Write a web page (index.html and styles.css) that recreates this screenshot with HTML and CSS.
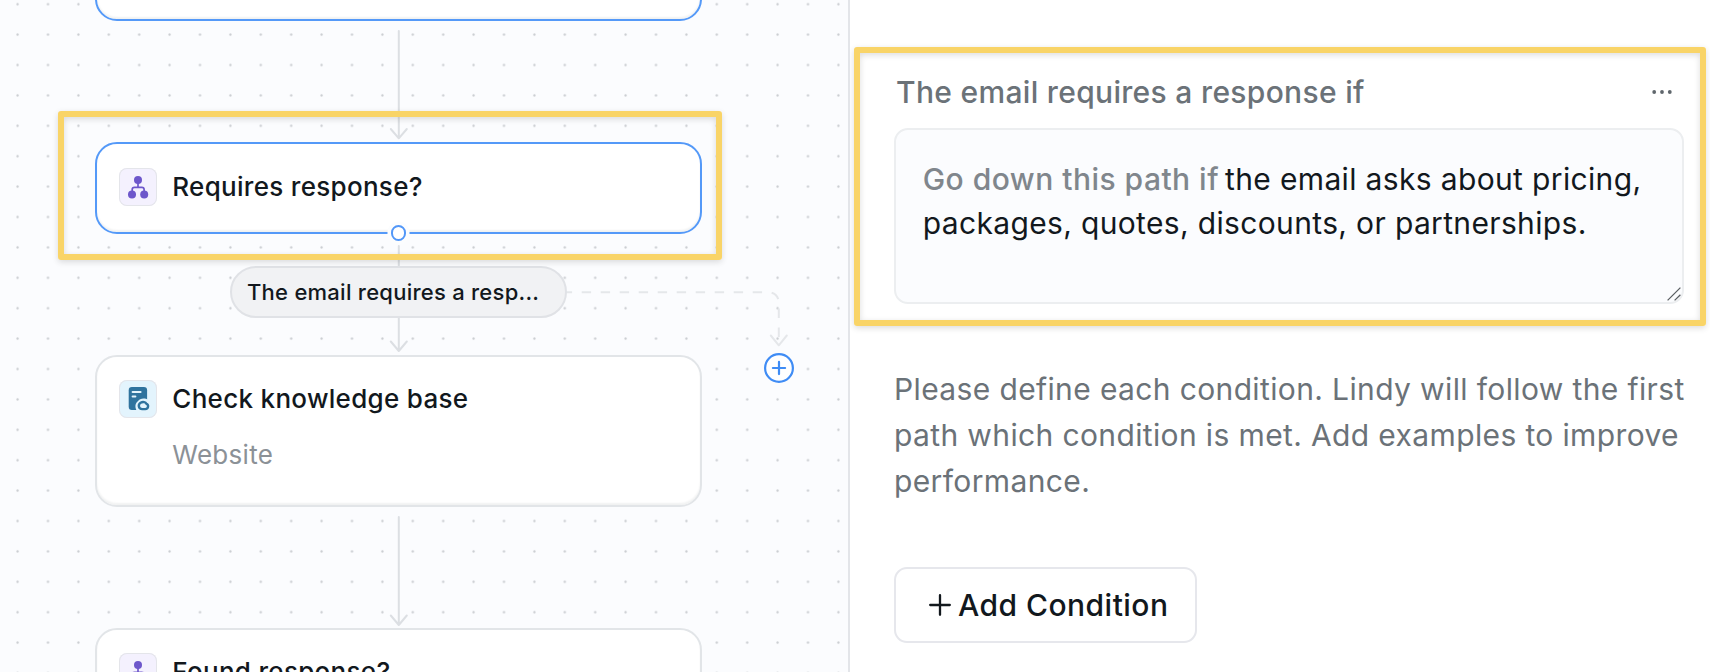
FILE: index.html
```html
<!DOCTYPE html>
<html lang="en">
<head>
<meta charset="utf-8">
<title>Workflow editor</title>
<link rel="stylesheet" href="styles.css">
</head>
<body>
<main class="editor">
  <section class="canvas">
    <svg class="edges" width="848" height="672" viewBox="0 0 848 672">
      <defs>
        <pattern id="dots" x="2.4" y="-11" width="30.4" height="30.4" patternUnits="userSpaceOnUse">
          <circle cx="15.2" cy="15.2" r="1.15"/>
        </pattern>
      </defs>
      <rect class="dots" width="848" height="672" fill="url(#dots)"/>
      <g class="edge">
        <path d="M398.8 31V138.3M390.8 129L398.8 138.3L406.8 129"/>
        <path d="M398.8 246V351M390.8 341.5L398.8 351L406.8 341.5"/>
        <path d="M398.8 517V625M390.8 615.5L398.8 625L406.8 615.5"/>
      </g>
      <path class="edge edge-dashed" d="M562.7 292.3H768.8A10 10 0 0 1 778.8 302.3V338"/>
      <path class="edge edge-light" d="M770.8 335.5L778.8 345.3L786.8 335.5"/>
    </svg>

    <article class="node node-top node-selected"></article>

    <article class="node node-requires node-selected">
      <header class="node-head">
        <svg class="tile tile-branch" viewBox="0 0 38 38"><use href="#branch"/></svg>
        <h2 class="node-title">Requires response?</h2>
      </header>
      <span class="handle"></span>
    </article>

    <div class="pill">The email requires a resp...</div>

    <article class="node node-check">
      <header class="node-head">
        <svg class="tile tile-knowledge" viewBox="0 0 38 38">
          <rect class="ink" x="9.7" y="7" width="18.4" height="23" rx="3.2"/>
          <path class="paper-line" d="M13.6 12H21.6M13.6 16.6H16.4"/>
          <path class="paper" d="M17.6 30.6C15.4 26 16.6 22.6 19 21.2C20.2 18.8 24 17.8 27 18.8C28.6 19.4 29.6 20.4 30 21V31H17.6Z"/>
          <path class="cloud" d="M21.6 22.8C24 21.4 26.6 22.2 27.4 23.8C29.9 24.4 29.7 29.1 26.3 29.1H23.2C19.3 29 18.8 24.6 21.6 22.8Z"/>
        </svg>
        <h2 class="node-title">Check knowledge base</h2>
      </header>
      <p class="node-note">Website</p>
    </article>

    <article class="node node-found">
      <header class="node-head">
        <svg class="tile tile-branch" viewBox="0 0 38 38">
          <g id="branch">
            <path class="link" d="M19 12V19.3M13.2 26V21.6Q13.2 19.3 15.5 19.3H22.8Q25.1 19.3 25.1 21.6V26"/>
            <circle class="dot" cx="19" cy="12" r="4"/>
            <circle class="dot" cx="13" cy="26.6" r="4"/>
            <circle class="dot" cx="25.2" cy="26.6" r="4"/>
          </g>
        </svg>
        <h2 class="node-title">Found response?</h2>
      </header>
    </article>

    <svg class="add-step" viewBox="0 0 30 30"><circle cx="15" cy="15" r="13.9"/><path d="M8.9 15H21.1M15 8.9V21.1"/></svg>
    <div class="node-highlight highlight"></div>
  </section>

  <aside class="panel">
    <section class="condition highlight">
      <header class="condition-head">
        <h3 class="condition-title">The email requires a response if</h3>
        <svg class="more" viewBox="0 0 20 6"><circle cx="2.2" cy="3" r="1.9"/><circle cx="10" cy="3" r="1.9"/><circle cx="17.8" cy="3" r="1.9"/></svg>
      </header>
      <div class="field">
        <p class="field-text"><span class="prefix">Go down this path if</span>the email asks about pricing,<br>packages, quotes, discounts, or partnerships.</p>
        <svg class="grip" viewBox="0 0 14 14"><path d="M.6 13.4L13.4 .6M7.6 13.4L13.4 7.8"/></svg>
      </div>
    </section>
    <p class="hint">Please define each condition. Lindy will follow the first path which condition is met. Add examples to improve performance.</p>
    <button class="add-condition" type="button">
      <svg class="plus" viewBox="0 0 22 22"><path d="M1.2 11H20.8M11 1.2V20.8"/></svg>
      <span>Add Condition</span>
    </button>
  </aside>
</main>
</body>
</html>
```
FILE: styles.css
```css
* { box-sizing: border-box; margin: 0; padding: 0; }
body {
  font-family: Inter, "Liberation Sans", sans-serif;
  color: #12181d;
  background: #fff;
}
h2, h3 { font-weight: 500; }
.editor { display: flex; width: 1710px; height: 672px; overflow: hidden; }

/* canvas */
.canvas {
  position: relative;
  flex: none;
  width: 850px;
  overflow: hidden;
  background: #fbfcfe;
  border-right: 2px solid #e3e5e9;
}
.edges { position: absolute; left: 0; top: 0; }
.edges pattern circle { fill: #c9ccd0; }
.edge { fill: none; stroke: #dcdfe3; stroke-width: 2; stroke-linecap: round; stroke-linejoin: round; }
.edge-dashed { stroke: #e5e7ea; stroke-dasharray: 9.4 9.6; stroke-linecap: butt; }
.edge-light { stroke: #e5e7ea; }

.node {
  position: absolute;
  left: 95px;
  width: 607px;
  padding: 23.3px 22.3px;
  background: #fff;
  border: 2px solid #e2e5e8;
  border-radius: 22px;
  box-shadow: inset 0 -2px 2px rgba(20, 30, 40, .06);
}
.node-selected { border-color: #5499f8; }
.node-top { top: -70px; height: 91px; }
.node-requires { top: 142.3px; height: 91.3px; }
.node-check { top: 355px; height: 151.5px; }
.node-found { top: 628px; height: 92px; }
.node-head { display: flex; align-items: center; gap: 15px; height: 38px; }
.tile { flex: none; width: 38px; height: 38px; border-radius: 8px; box-shadow: inset 0 0 0 1px #e4e5ea; }
.tile-branch { background: #f4f1fe; }
.tile-knowledge { background: #e3f4fd; }
.link { fill: none; stroke: #6d57cb; stroke-width: 1.7; }
.dot { fill: #6d57cb; }
.ink { fill: #2f739e; }
.paper-line { stroke: #e3f4fd; stroke-width: 2; stroke-linecap: round; }
.paper { fill: #e3f4fd; }
.cloud { fill: none; stroke: #2f739e; stroke-width: 2.4; stroke-linejoin: round; }
.node-title { font-size: 26px; line-height: 38px; letter-spacing: .3px; white-space: nowrap; }
.node-requires .node-title { line-height: 39px; }
.node-note { margin: 17.7px 0 0 53px; font-size: 26px; line-height: 38px; letter-spacing: .3px; color: #8b9197; }

.handle {
  position: absolute;
  left: 50%;
  bottom: -9px;
  width: 15.4px;
  height: 15.4px;
  margin-left: -7.7px;
  background: #fff;
  border: 2px solid #5297f8;
  border-radius: 50%;
  box-shadow: 0 0 0 3.5px #fcfdfe;
}
.pill {
  position: absolute;
  left: 230px;
  top: 266px;
  width: 337px;
  height: 52.4px;
  padding-left: 15px;
  background: #f1f2f4;
  border: 2px solid #e0e2e6;
  border-radius: 27px;
  font-size: 22px;
  font-weight: 500;
  line-height: 48.6px;
  letter-spacing: .25px;
  white-space: nowrap;
}
.add-step { position: absolute; left: 763.8px; top: 353.3px; width: 30px; height: 30px; }
.add-step circle { fill: #fff; stroke: #3f8cf5; stroke-width: 2.2; }
.add-step path { stroke: #3f8cf5; stroke-width: 2.2; stroke-linecap: round; }

.highlight {
  border: 6px solid #f9d467;
  border-radius: 3px;
  box-shadow: 0 2px 6px rgba(0, 0, 0, .14), inset 0 2px 6px rgba(0, 0, 0, .14);
}
.node-highlight { position: absolute; left: 58px; top: 111px; width: 664px; height: 148.5px; }

/* side panel */
.panel { flex: 1; padding: 47px 4px 0 4px; }
.condition { padding: 21px 16px 16px 34px; }
.condition-head { display: flex; align-items: center; justify-content: space-between; padding: 0 12.4px 0 2px; }
.condition-title { font-size: 30px; line-height: 36px; letter-spacing: .32px; color: #6b7278; }
.more { width: 20px; height: 6px; fill: #5f666c; }
.field {
  position: relative;
  height: 176px;
  margin-top: 18px;
  padding: 27px 0 0 26.7px;
  background: #fbfcfe;
  border: 2px solid #eceef0;
  border-radius: 14px;
}
.field-text { font-size: 30px; line-height: 44px; letter-spacing: .35px; white-space: nowrap; }
.prefix { margin-right: 6px; font-weight: 500; letter-spacing: .48px; color: #80868c; }
.grip { position: absolute; right: 1px; bottom: 1px; width: 14px; height: 14px; fill: none; stroke: #5a5e62; stroke-width: 1.3; }
.hint { margin: 40px 0 0 40px; width: 800px; font-size: 30px; line-height: 46px; letter-spacing: .37px; color: #6b7278; }
.add-condition {
  display: flex;
  align-items: center;
  gap: 6.8px;
  width: 302.5px;
  height: 76px;
  margin: 63px 0 0 40.3px;
  padding: 0 0 0 33px;
  background: #fff;
  border: 2px solid #e6e7ec;
  border-radius: 13px;
  font: 500 30px/36px Inter, "Liberation Sans", sans-serif;
  letter-spacing: .46px;
  color: #12181d;
}
.plus { width: 22px; height: 22px; fill: none; stroke: #12181d; stroke-width: 2.3; stroke-linecap: round; }
```
